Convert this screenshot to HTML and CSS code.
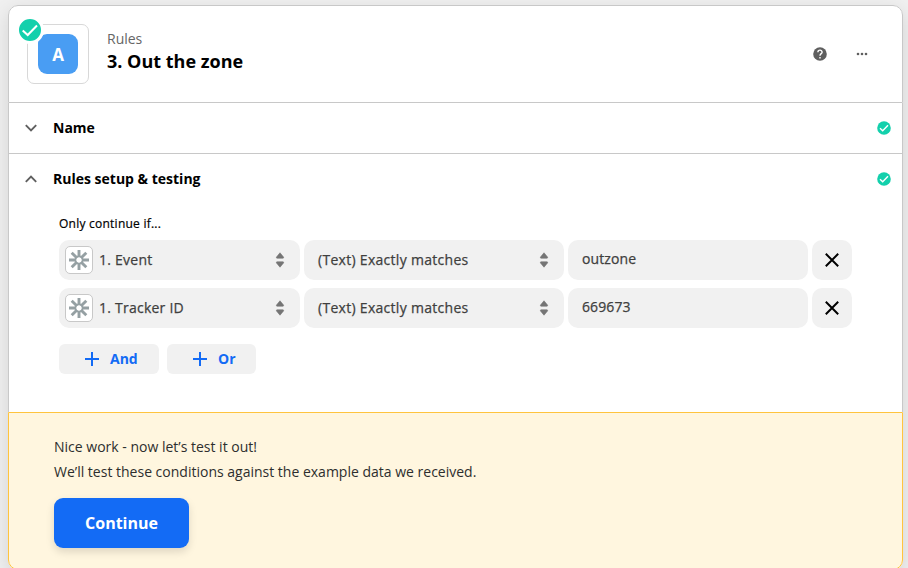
FILE: index.html
```html
<!DOCTYPE html>
<html lang="en">
<head>
<meta charset="utf-8">
<title>Rules</title>
<link rel="stylesheet" href="styles.css">
</head>
<body>
<svg class="defs" width="0" height="0" aria-hidden="true">
  <symbol id="done" viewBox="0 0 14 14"><circle cx="7" cy="7" r="6.8" fill="#13d0ac"/><path d="M3 7.2l2.7 2.6L11 4.3" fill="none" stroke="#fff" stroke-width="1.4"/></symbol>
  <symbol id="sort" viewBox="0 0 10 16"><path d="M5 .8L8.5 5q.6 1-.5 1.200H2Q.9 6 1.500 5zM5 15.200L8.500 11q.6-1-.5-1.200H2q-1.100.2-.5 1.200z" fill="#757575" stroke="#757575" stroke-width=".6"/></symbol>
  <symbol id="gear" viewBox="0 0 20 20"><g stroke="#95a0a3" stroke-width="2.900" fill="none"><path d="M10 0v7M10 13v7M0 10h7M13 10h7M2.700 2.700L8 8M12 12l5.300 5.300M17.300 2.700L12 8M8 12l-5.300 5.300"/><circle cx="10" cy="10" r="3.600" stroke-width="1.800"/></g></symbol>
  <symbol id="cross" viewBox="0 0 14 14"><path d="M.8.8l12.400 12.400M13.200.8L.8 13.200" stroke="#000" stroke-width="2" fill="none"/></symbol>
  <symbol id="plus" viewBox="0 0 14 14"><path d="M7 0v14M0 7h14" stroke="#136bf5" stroke-width="2" fill="none"/></symbol>
</svg>
<main class="card">
  <header class="head">
    <div class="app">
      <div class="app-icon">A</div>
      <span class="badge"><svg viewBox="0 0 22 22" width="22" height="22"><path d="M3.700 11.500l5 4.500L18 6.500" fill="none" stroke="#fff" stroke-width="2"/></svg></span>
    </div>
    <div class="titles">
      <div class="kind">Rules</div>
      <h1 class="title">3. Out the zone</h1>
    </div>
    <div class="tools">
      <svg width="14" height="14" viewBox="0 0 14 14"><circle cx="7" cy="7" r="6.800" fill="#5f5f5f"/><path d="M4.900 5.300C4.900 2.400 9.200 2.500 9.100 5.200 9 6.600 7 6.800 7 8.700" fill="none" stroke="#fff" stroke-width="1.400"/><path d="M6.300 10h1.400v1.400H6.300z" fill="#fff"/></svg>
      <svg width="12" height="4" viewBox="0 0 12 4"><g fill="#5f5f5f"><circle cx="2" cy="2" r="1.300"/><circle cx="6" cy="2" r="1.300"/><circle cx="10" cy="2" r="1.300"/></g></svg>
    </div>
  </header>
  <section class="row">
    <svg class="chev" width="12" height="8" viewBox="0 0 12 8"><path d="M.8 1.200L6 6.400l5.200-5.200" fill="none" stroke="#5f5f5f" stroke-width="1.900"/></svg>
    <h2 class="label">Name</h2>
    <svg class="done" width="14" height="14"><use href="#done"/></svg>
  </section>
  <section class="row">
    <svg class="chev" width="12" height="8" viewBox="0 0 12 8"><path d="M.8 6.800L6 1.600l5.200 5.200" fill="none" stroke="#5f5f5f" stroke-width="1.900"/></svg>
    <h2 class="label">Rules setup &amp; testing</h2>
    <svg class="done" width="14" height="14"><use href="#done"/></svg>
  </section>
  <section class="rules">
    <p class="hint">Only continue if...</p>
    <div class="rule">
      <div class="field source"><span class="gear"><svg width="20" height="20"><use href="#gear"/></svg></span><span class="text">1. Event</span><svg class="sort" width="10" height="16"><use href="#sort"/></svg></div>
      <div class="field"><span class="text">(Text) Exactly matches</span><svg class="sort" width="10" height="16"><use href="#sort"/></svg></div>
      <div class="field value"><span class="text">outzone</span></div>
      <div class="field remove"><svg width="14" height="14"><use href="#cross"/></svg></div>
    </div>
    <div class="rule">
      <div class="field source"><span class="gear"><svg width="20" height="20"><use href="#gear"/></svg></span><span class="text">1. Tracker ID</span><svg class="sort" width="10" height="16"><use href="#sort"/></svg></div>
      <div class="field"><span class="text">(Text) Exactly matches</span><svg class="sort" width="10" height="16"><use href="#sort"/></svg></div>
      <div class="field value"><span class="text">669673</span></div>
      <div class="field remove"><svg width="14" height="14"><use href="#cross"/></svg></div>
    </div>
    <div class="adders">
      <div class="add and"><svg width="14" height="14"><use href="#plus"/></svg><span>And</span></div>
      <div class="add or"><svg width="14" height="14"><use href="#plus"/></svg><span>Or</span></div>
    </div>
  </section>
  <footer class="test">
    <p>Nice work - now let’s test it out!</p>
    <p>We’ll test these conditions against the example data we received.</p>
    <div class="continue">Continue</div>
  </footer>
</main>
</body>
</html>
```
FILE: styles.css
```css
* { box-sizing: border-box; }
html { overflow: hidden; }
body { margin: 0; height: 568px; overflow: hidden; padding: 5px 5px 0 8px; background: #f0f0f0; font: 14px/20px "Open Sans", sans-serif; color: #000; }
.defs { position: absolute; }
svg { display: block; flex: none; }
h1, h2, p { margin: 0; }
.card { width: 895px; border-radius: 10px; background: #fff; box-shadow: 0 6px 20px rgba(0,0,0,.12); }
.head { display: flex; height: 98px; border: 1px solid #c8c8c8; border-radius: 10px 10px 0 0; padding: 18px 34px 0 18px; }
.app { position: relative; width: 62px; height: 60px; border: 1px solid #d8d8d8; border-radius: 7px; padding: 9px 10px; }
.app-icon { width: 40px; height: 40px; border-radius: 9px; background: #499df3; color: #fff; font-weight: 700; font-size: 17px; line-height: 41px; text-align: center; }
.badge { position: absolute; left: -12px; top: -9px; width: 28px; height: 28px; border: 3px solid #fff; border-radius: 50%; background: #13d0ac; }
.titles { margin-left: 18px; padding-top: 5px; }
.kind { color: #666; }
.title { font-size: 18px; line-height: 24px; font-weight: 700; }
.tools { display: flex; align-items: center; gap: 29px; height: 60px; margin-left: auto; }
.row { display: flex; align-items: center; height: 51px; border: 1px solid #c8c8c8; border-top: 0; padding: 0 11px 0 16px; }
.row + .row { border-bottom: 0; height: 50px; }
.label { margin-left: 16px; font-size: 14px; line-height: 20px; font-weight: 700; }
.done { margin-left: auto; }
.rules { height: 208px; border: solid #c8c8c8; border-width: 0 1px; padding: 11px 50px 0; }
.hint { font-size: 12px; line-height: 18px; margin-bottom: 7px; letter-spacing: .24px; -webkit-text-stroke: .2px; }
.rule { display: grid; grid-template-columns: 241px 260px 240px 40px; gap: 4px; margin-bottom: 8px; }
.field { display: flex; align-items: center; height: 40px; border-radius: 10px; background: #f1f1f1; padding: 0 15px 0 14px; color: #403f3e; letter-spacing: .29px; }
.text { -webkit-text-stroke: .25px; }
.source { padding-left: 6px; letter-spacing: .24px; }
.gear { display: grid; place-items: center; width: 28px; height: 28px; margin-right: 6px; border: 1px solid #c8c8c8; border-radius: 5px; background: #fff; }
.sort { margin-left: auto; }
.value { padding-bottom: 2px; letter-spacing: .1px; }
.remove { justify-content: center; padding: 0; }
.adders { display: flex; gap: 8px; margin-top: 16px; }
.add { display: flex; align-items: center; gap: 11px; height: 30px; border-radius: 6px; background: #f1f1f1; color: #136bf5; font-weight: 700; padding-left: 26px; }
.and { width: 100px; }
.or { width: 89px; }
.test { height: 158px; border: 1px solid #ffc43e; border-radius: 0 0 10px 10px; background: #fff6df; color: #2d2e2e; padding: 21px 45px 0; line-height: 25px; }
.continue { width: 135px; height: 50px; margin-top: 14px; border-radius: 9px; background: #136bf5; box-shadow: 0 4px 9px rgba(0,0,0,.13); color: #fff; font-size: 16px; line-height: 50px; font-weight: 700; text-align: center; }
```
